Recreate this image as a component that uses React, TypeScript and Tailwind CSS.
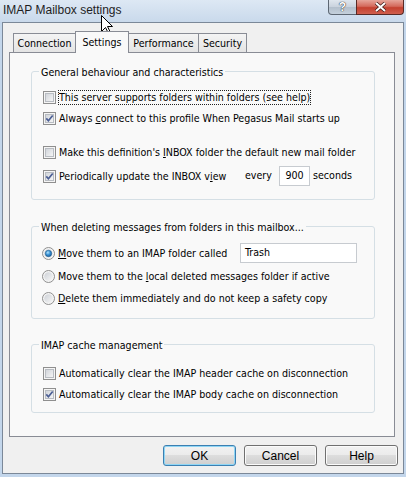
import React from "react";

function Checkbox({ checked }: { checked?: boolean }) {
  return (
    <svg width="13" height="13" viewBox="0 0 13 13" className="shrink-0 block">
      <defs>
        <linearGradient id="cbInner" x1="0" y1="0" x2="1" y2="1">
          <stop offset="0" stopColor="#cfd3d9" />
          <stop offset="1" stopColor="#f7f7f7" />
        </linearGradient>
      </defs>
      <rect x="0.5" y="0.5" width="12" height="12" fill="#f5f5f5" stroke="#8f8f8f" />
      <rect x="2.5" y="2.5" width="8" height="8" fill="url(#cbInner)" stroke="#b8bcc2" />
      {checked && (
        <path d="M3.3 6.4 L5.4 8.8 L9.7 3.5" fill="none" stroke="#4b5e94" strokeWidth="1.7" />
      )}
    </svg>
  );
}

function Radio({ checked }: { checked?: boolean }) {
  return (
    <svg width="13" height="13" viewBox="0 0 13 13" className="shrink-0 block">
      <defs>
        <linearGradient id="rbInner" x1="0" y1="0" x2="1" y2="1">
          <stop offset="0" stopColor="#cdd1d7" />
          <stop offset="1" stopColor="#f6f6f6" />
        </linearGradient>
        <radialGradient id="rbDot" cx="0.4" cy="0.35" r="0.7">
          <stop offset="0" stopColor="#b2e4ff" />
          <stop offset="0.5" stopColor="#3a93d5" />
          <stop offset="1" stopColor="#15599a" />
        </radialGradient>
      </defs>
      <circle cx="6.5" cy="6.5" r="6" fill="#f4f4f4" stroke="#8f8f8f" />
      <circle cx="6.5" cy="6.5" r="4.3" fill="url(#rbInner)" />
      {checked && <circle cx="6.5" cy="6.5" r="3.2" fill="url(#rbDot)" stroke="#1d5c8f" strokeWidth="0.6" />}
    </svg>
  );
}

function Group({ title, className, children }: { title: string; className: string; children: React.ReactNode }) {
  return (
    <div className={"relative w-[344px] shrink-0 border border-[#d5dfe5] rounded-[3px] flex flex-col " + className}>
      <span className="absolute left-[7px] -top-[8px] px-[2px] bg-[#f9f9f9] leading-[16px] whitespace-nowrap">{title}</span>
      {children}
    </div>
  );
}

function CheckRow({ checked, children, className, focus }: { checked?: boolean; children: React.ReactNode; className?: string; focus?: boolean }) {
  return (
    <div className={"flex items-center h-[17px] pl-[11px] " + (className ?? "")}>
      <Checkbox checked={checked} />
      <span
        className={
          "ml-[2px] border leading-[13px] whitespace-nowrap " +
          (focus ? "border-dotted border-[#222]" : "border-transparent")
        }
      >
        {children}
      </span>
    </div>
  );
}

function RadioRow({ checked, children, className }: { checked?: boolean; children: React.ReactNode; className?: string }) {
  return (
    <div className={"flex items-center h-[17px] pl-[10px] " + (className ?? "")}>
      <Radio checked={checked} />
      <span className="ml-[2px] border border-transparent leading-[13px] whitespace-nowrap">{children}</span>
    </div>
  );
}

function Btn({ label, primary }: { label: string; primary?: boolean }) {
  return (
    <div
      className={
        "w-[73px] h-[21px] rounded-[3px] border flex items-center justify-center bg-[linear-gradient(#f2f2f2_0%,#ebebeb_50%,#dddddd_50%,#cfcfcf_100%)] " +
        (primary
          ? "border-[#3c7fb1] shadow-[inset_0_0_0_1px_#8fd6f5]"
          : "border-[#707070] shadow-[inset_0_0_0_1px_#fbfbfb]")
      }
    >
      {label}
    </div>
  );
}

export default function App() {
  return (
    <div className="w-[406px] h-[477px] overflow-hidden relative bg-[#c3d6eb] text-[10.6px] text-black font-['DejaVu_Sans_Condensed','Liberation_Sans',sans-serif]">
      {/* title bar */}
      <div className="h-[22px] flex items-start bg-[linear-gradient(#dde8f4,#c9d9eb)]">
        <span className="ml-[3px] mt-[2px] text-[12px] leading-[16px] text-[#1e1e1e] font-['Liberation_Sans',sans-serif]">
          IMAP Mailbox settings
        </span>
        <div className="ml-auto mr-[2px] flex">
          <div className="w-[29px] h-[15px] border border-t-0 border-[#5d6773] rounded-bl-[4px] bg-[linear-gradient(#dfe6ee_0%,#c9d2dd_50%,#b3bfcc_51%,#c4d0dc_100%)] flex items-center justify-center">
            <span className="text-white font-bold text-[12px] leading-[12px] font-['Liberation_Sans',sans-serif] [text-shadow:0_0_1px_#222,0_0_1px_#222]">?</span>
          </div>
          <div className="-ml-px w-[48px] h-[15px] border border-t-0 border-[#5a2a25] rounded-br-[4px] bg-[linear-gradient(#e6a59a_0%,#d46a5c_45%,#c4402f_55%,#d0604e_100%)] flex items-center justify-center">
            <svg width="13" height="10" viewBox="0 0 13 10">
              <path d="M2 1 L11 9 M11 1 L2 9" stroke="#3a1a16" strokeWidth="3.4" />
              <path d="M2 1 L11 9 M11 1 L2 9" stroke="#ffffff" strokeWidth="2" />
            </svg>
          </div>
        </div>
      </div>

      {/* client */}
      <div className="ml-[2px] w-[402px] h-[452px] border border-[#7b8898] bg-[#f0f0f0] flex flex-col pt-[8px] pl-[6px]">
        {/* tabs */}
        <div className="flex items-end h-[21px] pl-[4px] relative z-10">
          <div className="w-[63px] h-[19px] border border-b-0 border-[#898c95] bg-[linear-gradient(#f4f4f4,#e4e4e4)] flex items-center justify-center pt-[2px]">
            Connection
          </div>
          <div className="-ml-px -mb-px w-[54px] h-[22px] border border-b-0 border-[#898c95] bg-[#f9f9f9] flex items-center justify-center relative z-10">
            Settings
          </div>
          <div className="-ml-px w-[71px] h-[19px] border border-b-0 border-[#898c95] bg-[linear-gradient(#f4f4f4,#e4e4e4)] flex items-center justify-center pt-[2px]">
            Performance
          </div>
          <div className="-ml-px w-[49px] h-[19px] border border-b-0 border-[#898c95] bg-[linear-gradient(#f4f4f4,#e4e4e4)] flex items-center justify-center pt-[2px]">
            Security
          </div>
        </div>

        {/* panel */}
        <div className="w-[386px] h-[385px] border border-[#898c95] bg-[#f9f9f9] pt-[18px] pl-[21px] flex flex-col">
          <Group title="General behaviour and characteristics" className="h-[129px] pt-[17px]">
            <CheckRow focus>This server supports folders within folders (see help)</CheckRow>
            <CheckRow checked className="mt-[4px]">
              Always <span className="underline">c</span>onnect to this profile When Pegasus Mail starts up
            </CheckRow>
            <CheckRow className="mt-[17px]">
              Make this definition's <span className="underline">I</span>NBOX folder the default new mail folder
            </CheckRow>
            <div className="flex items-center h-[20px] pl-[11px] mt-[5px]">
              <Checkbox checked />
              <span className="ml-[2px] w-[187px] border border-transparent leading-[13px] whitespace-nowrap">
                Periodically update the INBOX v<span className="underline">i</span>ew
              </span>
              <span className="w-[34px] whitespace-nowrap">every</span>
              <div className="w-[31px] h-[20px] border border-[#c7cbd0] bg-white flex items-center justify-center">900</div>
              <span className="ml-[3px] whitespace-nowrap">seconds</span>
            </div>
          </Group>

          <Group title="When deleting messages from folders in this mailbox..." className="mt-[26px] h-[93px] pt-[16px]">
            <div className="flex items-center h-[20px] pl-[10px]">
              <Radio checked />
              <span className="ml-[2px] w-[182px] border border-transparent leading-[13px] whitespace-nowrap">
                <span className="underline">M</span>ove them to an IMAP folder called
              </span>
              <div className="ml-[1px] w-[117px] h-[20px] border border-[#c7cbd0] bg-white flex items-center pl-[4px]">Trash</div>
            </div>
            <RadioRow className="mt-[5px]">
              Move them to the <span className="underline">l</span>ocal deleted messages folder if active
            </RadioRow>
            <RadioRow className="mt-[5px]">
              <span className="underline">D</span>elete them immediately and do not keep a safety copy
            </RadioRow>
          </Group>

          <Group title="IMAP cache management" className="mt-[25px] h-[69px] pt-[20px]">
            <CheckRow>Automatically clear the IMAP header cache on disconnection</CheckRow>
            <CheckRow checked className="mt-[4px]">
              Automatically clear the IMAP body cache on disconnection
            </CheckRow>
          </Group>
        </div>

        {/* buttons */}
        <div className="mt-[8px] flex justify-end gap-[8px] pr-[5px] text-[12px] font-['Liberation_Sans',sans-serif]">
          <Btn label="OK" primary />
          <Btn label="Cancel" />
          <Btn label="Help" />
        </div>
      </div>

      {/* mouse cursor */}
      <svg className="absolute left-[101px] top-[15px]" width="13" height="20" viewBox="0 0 13 20">
        <path d="M0.5 0.5 L0.5 16.5 L4.5 12.5 L7.5 18.5 L9.5 17.5 L6.5 11.5 L11.5 11.5 Z" fill="#ffffff" stroke="#000000" strokeWidth="1" />
      </svg>
    </div>
  );
}
